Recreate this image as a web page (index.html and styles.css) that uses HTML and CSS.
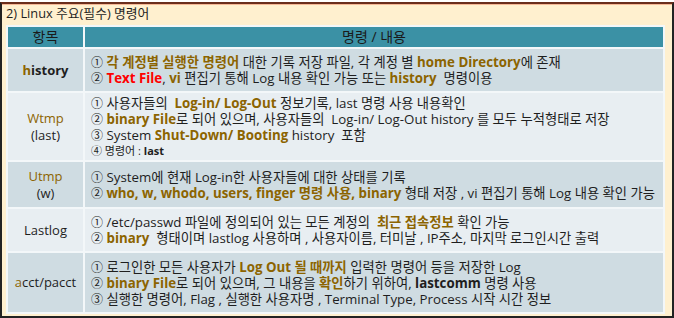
FILE: index.html
```html
<!DOCTYPE html>
<html lang="ko">
<head>
<meta charset="utf-8">
<link rel="stylesheet" href="styles.css">
</head>
<body>
<div class="frame">
  <div class="title">2) Linux 주요(필수) 명령어</div>
  <table class="cmd">
    <colgroup><col class="c1"><col class="c2"></colgroup>
    <thead>
      <tr class="head"><th>항목</th><th>명령 / 내용</th></tr>
    </thead>
    <tbody>
      <tr class="dark r1">
        <td class="name"><b><span class="g">h</span>istory</b></td>
        <td>
          <div><span class="n">①</span> <b class="g">각 계정별 실행한 명령어</b> 대한 기록 저장 파일, 각 계정 별 <b class="g">home Directory</b>에 존재</div>
          <div><span class="n">②</span> <b class="r">Text File</b>, <b class="g">vi</b> 편집기 통해 Log 내용 확인 가능 또는 <b class="g">history</b>&nbsp; 명령이용</div>
        </td>
      </tr>
      <tr class="light r2">
        <td class="name"><span class="g">Wtmp</span><br>(last)</td>
        <td>
          <div><span class="n">①</span> 사용자들의&nbsp; <b class="g">Log-in/ Log-Out</b> 정보기록, last 명령 사용 내용확인</div>
          <div><span class="n">②</span> <b class="g">binary File</b>로 되어 있으며, 사용자들의&nbsp; Log-in/ Log-Out history 를 모두 누적형태로 저장</div>
          <div><span class="n">③</span> System <b class="g">Shut-Down/ Booting</b> history&nbsp; 포함</div>
          <div class="small"><span class="n">④</span> 명령어 : <b>last</b></div>
        </td>
      </tr>
      <tr class="dark r3">
        <td class="name"><span class="g">Utmp</span><br>(w)</td>
        <td>
          <div><span class="n">①</span> System에 현재 Log-in한 사용자들에 대한 상태를 기록</div>
          <div><span class="n">②</span> <b class="g">who, w, whodo, users, finger 명령 사용, binary</b> 형태 저장 , vi 편집기 통해 Log 내용 확인 가능</div>
        </td>
      </tr>
      <tr class="light r4">
        <td class="name">Lastlog</td>
        <td>
          <div><span class="n">①</span> /etc/passwd 파일에 정의되어 있는 모든 계정의&nbsp; <b class="g">최근 접속정보</b> 확인 가능</div>
          <div><span class="n">②</span> <b class="g">binary</b>&nbsp; 형태이며 lastlog 사용하며 , 사용자이름, 터미날 , IP주소, 마지막 로그인시간 출력</div>
        </td>
      </tr>
      <tr class="dark r5">
        <td class="name"><span class="g">a</span>cct/pacct</td>
        <td>
          <div><span class="n">①</span> 로그인한 모든 사용자가 <b class="g">Log Out 될 때까지</b> 입력한 명령어 등을 저장한 Log</div>
          <div><span class="n">②</span> <b class="g">binary File</b>로 되어 있으며, 그 내용을 <b class="g">확인</b>하기 위하여, <b>lastcomm</b> 명령 사용</div>
          <div><span class="n">③</span> 실행한 명령어, Flag , 실행한 사용자명 , Terminal Type, Process 시작 시간 정보</div>
        </td>
      </tr>
    </tbody>
  </table>
</div>
</body>
</html>
```
FILE: styles.css
```css
html, body {
  margin: 0;
  padding: 0;
  background: #fff;
}
.frame {
  box-sizing: border-box;
  width: 674px;
  height: 316px;
  margin-top: 2px;
  background: #fff0cf;
  border-top: 2px solid #6b2e1c;
  border-left: 2px solid #222;
  border-right: 2px solid #222;
  border-bottom: 2px solid #222;
  box-shadow: inset 0 1px 0 #f5b896;
  padding: 0 0 0 4px;
  font-family: "Open Sans", "Noto Sans CJK KR", sans-serif;
  color: #1e1e1e;
}
.title {
  font-size: 12.8px;
  height: 21px;
  line-height: 19px;
}
.cmd {
  border-collapse: collapse;
  width: 659px;
  font-size: 13.3px;
  line-height: 16px;
}
.c1 { width: 77px; }
.cmd th, .cmd td {
  border: 2px solid #f3f7f9;
  padding: 0;
}
.head th {
  background: #3b91a5;
  height: 20px;
  font-weight: normal;
  font-size: 14px;
  color: #1a1a1a;
  text-align: center;
}
.cmd td {
  padding-left: 6px;
  vertical-align: middle;
  white-space: nowrap;
}
.cmd td.name {
  text-align: center;
  padding-left: 0;
  font-size: 13px;
  line-height: 17px;
}
.dark td { background: #cfdce2; }
.light td { background: #e8eef2; }
.r1 td { height: 42px; }
.r2 td { height: 67px; }
.r3 td { height: 45px; }
.r4 td { height: 42px; }
.r5 td { height: 59px; }
.g { color: #8c6400; }
.r { color: #ff0000; }
b { font-weight: bold; }
.n { font-size: 12px; line-height: 14px; }
.small { font-size: 11px; }
.small .n { font-size: 11px; }
```
